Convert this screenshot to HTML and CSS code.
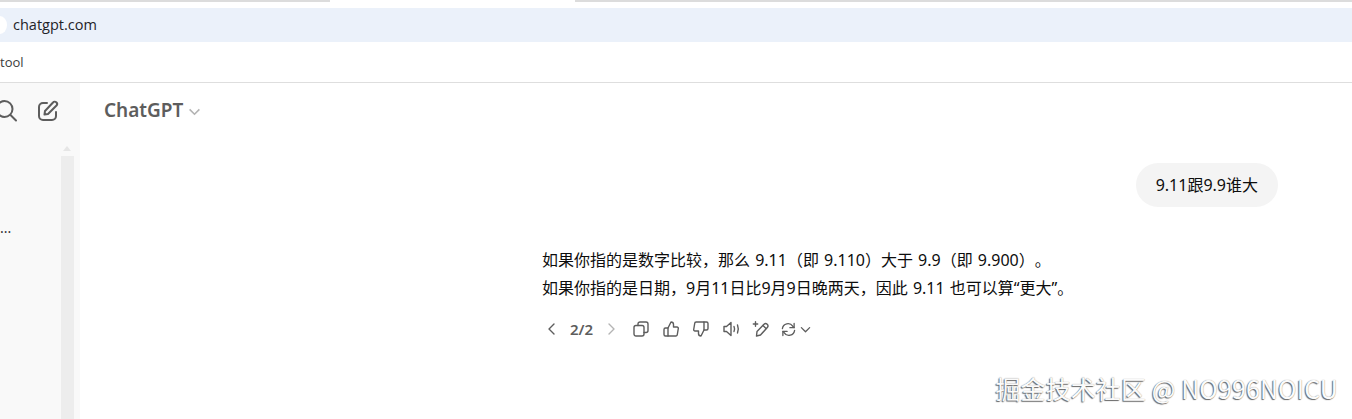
FILE: index.html
```html
<!DOCTYPE html>
<html lang="zh-CN">
<head>
    <meta charset="UTF-8">
    <title>ChatGPT</title>
    <link rel="stylesheet" href="styles.css">
</head>
<body>
    <div class="tab-strip">
        <div class="tab-left"></div>
        <div class="tab-right"></div>
    </div>
    <div class="address-bar">
        <span class="favicon"></span>
        <span class="url">chatgpt.com</span>
    </div>
    <div class="bookmarks">
        <span class="bookmark">tool</span>
    </div>

    <div class="app">
        <aside class="sidebar">
            <div class="side-icons">
                <svg class="side-icon" viewBox="0 0 24 24"><circle cx="8.5" cy="10" r="8"/><path d="M14.5 16l5.5 5.5"/></svg>
                <svg class="side-icon" viewBox="0 0 24 24"><path d="M11 4H7a4 4 0 0 0-4 4v9a4 4 0 0 0 4 4h9a4 4 0 0 0 4-4v-4"/><path d="M9 12l8-8.500a2 2 0 0 1 3.500 3L12 15l-3.500.5z"/></svg>
            </div>
            <div class="side-body">
                <span class="side-dots">...</span>
                <div class="scrollbar"></div>
            </div>
        </aside>

        <main class="chat">
            <header class="chat-header">
                <span class="model-name">ChatGPT</span>
                <svg class="model-caret" viewBox="0 0 12 12"><path d="M1.500 4l4.500 4.500L10.500 4"/></svg>
            </header>

            <div class="user-row">
                <div class="user-bubble">9.11跟9.9谁大</div>
            </div>

            <div class="answer">
                <p class="answer-line">如果你指的是数字比较，那么 9.11（即 9.110）大于 9.9（即 9.900）。</p>
                <p class="answer-line">如果你指的是日期，9月11日比9月9日晚两天，因此 9.11 也可以算“更大”。</p>
                <div class="actions">
                    <svg class="act act-nav" viewBox="0 0 16 16"><path d="M10 3L5 8l5 5"/></svg>
                    <span class="pager">2/2</span>
                    <svg class="act act-nav act-off" viewBox="0 0 16 16"><path d="M6 3l5 5-5 5"/></svg>
                    <svg class="act act-copy" viewBox="0 0 16 16"><rect x="1" y="4.500" width="10" height="10.500" rx="2"/><path d="M5 4.500V3a2 2 0 0 1 2-2h6a2 2 0 0 1 2 2v6.500a2 2 0 0 1-2 2h-2"/></svg>
                    <svg class="act act-thumb" viewBox="0 0 16 16"><path d="M5 7l3-6c1.500 0 2.500 1 2.500 2.500V6H14a1.300 1.300 0 0 1 1.300 1.500l-1 6A1.500 1.500 0 0 1 12.800 15H5z"/><path d="M5 7H2.500A1.500 1.500 0 0 0 1 8.500v5A1.500 1.500 0 0 0 2.500 15H5"/></svg>
                    <svg class="act act-thumb" viewBox="0 0 16 16"><path d="M11 9l-3 6c-1.500 0-2.500-1-2.500-2.500V10H2A1.300 1.300 0 0 1 .7 8.500l1-6A1.500 1.500 0 0 1 3.200 1H11z"/><path d="M11 1h2.500A1.500 1.500 0 0 1 15 2.500v5A1.500 1.500 0 0 1 13.500 9H11"/></svg>
                    <svg class="act act-speak" viewBox="0 0 18 16"><path d="M1 5.500h2.500L8 1.500v13l-4.500-4H1z"/><path d="M11 5.500c.7 1.500.7 3.500 0 5"/><path d="M14.500 4c1 2.500 1 5.500 0 8"/></svg>
                    <svg class="act act-edit" viewBox="0 0 18 16"><path d="M4.500 15l.5-4.500L12 3.300a2.300 2.300 0 0 1 3.300 3.200L8.500 14z"/><path d="M11 4.500l3 3"/><path d="M3.500 .8v4.400M1.300 3h4.400"/></svg>
                    <svg class="act act-redo" viewBox="0 0 16 16"><path d="M1.500 7a6 6 0 0 1 11-2.500l1.500 1.500"/><path d="M14 1.500V6H9.500"/><path d="M14.500 9a6 6 0 0 1-11 2.500L2 10"/><path d="M2 14.500V10h4.500"/></svg>
                    <svg class="act act-caret" viewBox="0 0 12 12"><path d="M1.500 4l4.500 4.500L10.500 4"/></svg>
                </div>
            </div>
        </main>
    </div>

    <div class="watermark">掘金技术社区 @ NO996NOICU</div>
</body>
</html>
```

FILE: styles.css
```css
* {
    margin: 0;
    padding: 0;
    box-sizing: border-box;
}

body {
    width: 1352px;
    height: 419px;
    overflow: hidden;
    position: relative;
    background: white;
    font-family: "Noto Sans", "Noto Sans CJK SC", sans-serif;
    color: #0d0d0d;
}

/* Browser chrome */
.tab-strip {
    height: 8px;
    display: flex;
    justify-content: space-between;
    background: white;
}

.tab-left {
    width: 330px;
    height: 2px;
    background: #dcdcdc;
}

.tab-right {
    width: 777px;
    height: 2px;
    background: #dcdcdc;
}

.address-bar {
    height: 34px;
    display: flex;
    align-items: center;
    gap: 6px;
    padding-bottom: 1px;
    background: #ebf1fa;
}

.favicon {
    width: 14px;
    height: 18px;
    margin-left: -7px;
    border-radius: 50%;
    background: white;
}

.url {
    font-family: "Open Sans", sans-serif;
    font-size: 14.5px;
    color: #1f2328;
}

.bookmarks {
    height: 41px;
    display: flex;
    align-items: center;
    border-bottom: 1px solid #dedede;
}

.bookmark {
    font-family: "Open Sans", sans-serif;
    font-size: 13px;
    color: #3c3c3c;
}

/* App */
.app {
    display: flex;
    height: 336px;
}

.sidebar {
    width: 80px;
    flex: none;
    background: #f9f9f9;
}

.side-icons {
    height: 56px;
    display: flex;
    align-items: center;
    gap: 16px;
    margin-left: -4px;
}

.side-icon {
    width: 24px;
    height: 24px;
    fill: none;
    stroke: #5d5d5d;
    stroke-width: 2;
    stroke-linecap: round;
    stroke-linejoin: round;
}

.side-body {
    display: flex;
    height: 280px;
    padding-top: 17px;
}

.side-dots {
    width: 61px;
    margin-top: 62px;
    font-size: 14px;
    color: #333;
}

.scrollbar {
    position: relative;
    width: 13px;
    height: 263px;
    background: #ededed;
}

/* scroll arrow */
.scrollbar::before {
    content: "";
    position: absolute;
    top: -10px;
    left: 2px;
    border-left: 4px solid transparent;
    border-right: 4px solid transparent;
    border-bottom: 5px solid #e6e6e6;
}

.chat {
    flex: 1;
    min-width: 0;
    background: white;
}

.chat-header {
    height: 55px;
    padding-left: 24px;
    padding-bottom: 2px;
    display: flex;
    align-items: center;
    gap: 5px;
}

.model-name {
    font-size: 19px;
    font-weight: 600;
    color: #5d5d5d;
}

.model-caret {
    width: 13px;
    height: 13px;
    margin-top: 3px;
    fill: none;
    stroke: #b4b4b4;
    stroke-width: 1.500;
}

.user-row {
    display: flex;
    justify-content: flex-end;
    padding: 25px 74px 0 0;
}

.user-bubble {
    height: 44px;
    padding: 0 20px 2px;
    display: flex;
    align-items: center;
    font-size: 16px;
    border-radius: 22px;
    background: #f4f4f4;
}

.answer {
    margin: 39px 0 0 462px;
}

.answer-line {
    font-size: 16px;
    line-height: 28px;
    white-space: nowrap;
    text-spacing-trim: space-all;
    word-spacing: 1px;
}

.actions {
    display: flex;
    align-items: center;
    height: 24px;
    margin-top: 15px;
    margin-left: 2px;
}

.act {
    flex: none;
    fill: none;
    stroke: #5d5d5d;
    stroke-width: 1.400;
    stroke-linecap: round;
    stroke-linejoin: round;
}

.act-nav {
    width: 16px;
    height: 16px;
}

.act-off {
    stroke: #b4b4b4;
}

.pager {
    font-size: 15px;
    font-weight: 600;
    color: #5d5d5d;
    margin: 0 10px;
}

.act-copy {
    width: 16px;
    height: 16px;
    margin-left: 14px;
}

.act-thumb {
    width: 16px;
    height: 16px;
    margin-left: 14px;
}

.act-speak {
    width: 18px;
    height: 16px;
    margin-left: 14px;
}

.act-edit {
    width: 18px;
    height: 16px;
    margin-left: 11px;
}

.act-redo {
    width: 15px;
    height: 15px;
    margin-left: 11px;
}

.act-caret {
    width: 11px;
    height: 11px;
    margin-left: 4px;
}

/* Site watermark over the screenshot */
.watermark {
    position: absolute;
    right: 14px;
    bottom: 17px;
    font-family: "Noto Sans CJK SC", sans-serif;
    font-size: 25px;
    letter-spacing: 0.1px;
    line-height: 28px;
    color: #fbfbfb;
    text-shadow: -1px 1px 1px #666, 0 0 1px #888;
    white-space: nowrap;
}
```
